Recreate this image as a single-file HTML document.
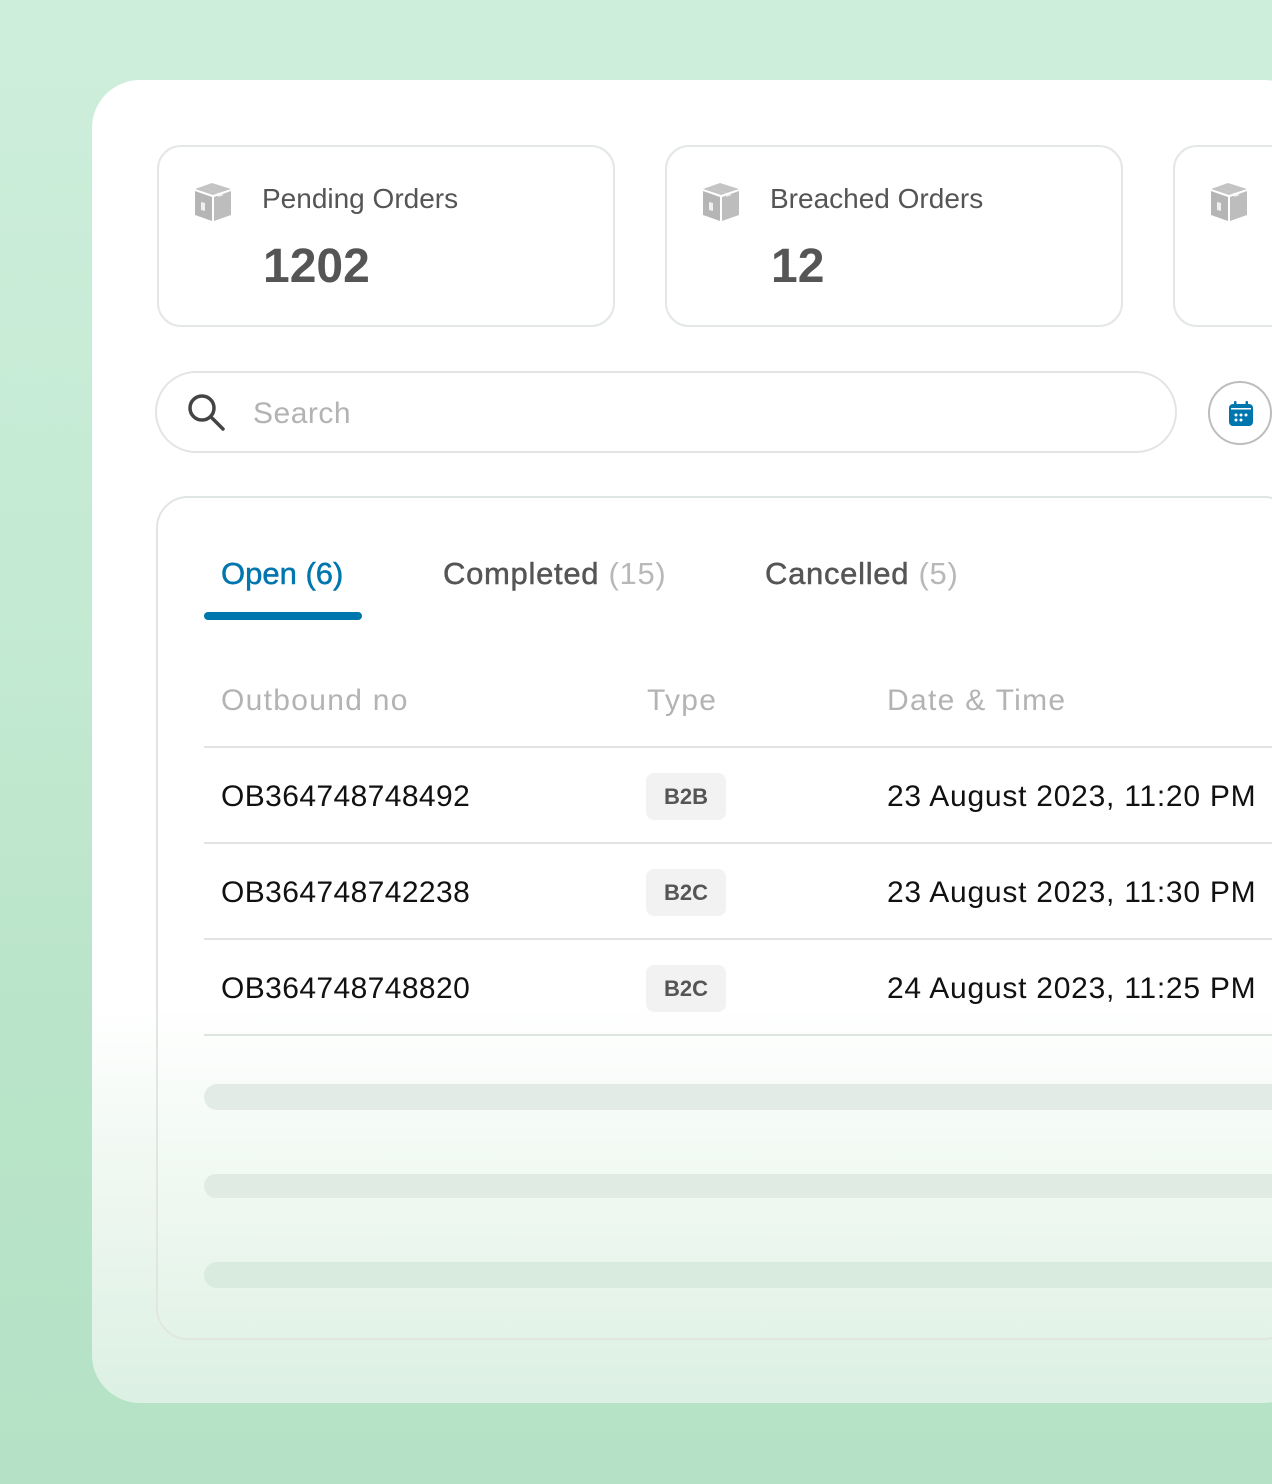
<!DOCTYPE html>
<html><head><meta charset="utf-8"><style>
*{margin:0;padding:0;box-sizing:border-box}
html,body{width:1272px;height:1484px;overflow:hidden}
body{font-family:"Liberation Sans",sans-serif;background:linear-gradient(180deg,#cdeedb 0%,#c4ead3 40%,#b9e4c9 70%,#b5e2c6 100%);position:relative}
.card{position:absolute;left:92px;top:80px;width:1220px;height:1323px;border-radius:48px;background:linear-gradient(180deg,#fff 0%,#fff 70%,#f0f8f2 82%,#dcf0e3 100%)}
.stat{position:absolute;top:145px;width:458px;height:182px;border:2px solid #e3e7e5;border-radius:24px;background:#fff}
.stat .ic{position:absolute;left:34px;top:34px}
.stat .t{position:absolute;left:103px;top:36px;font-size:28px;color:#555}
.stat .n{position:absolute;left:104px;top:92px;font-size:48px;font-weight:bold;color:#555}
.search{position:absolute;left:155px;top:371px;width:1022px;height:82px;border:2px solid #e3e5e4;border-radius:41px;background:#fff}
.search span{position:absolute;left:96px;top:24px;font-size:30px;color:#b3b3b3;letter-spacing:0.5px}
.cal{position:absolute;left:1208px;top:381px;width:64px;height:64px;border:2px solid #bdbdbd;border-radius:50%;background:#fff}
.panel{position:absolute;left:156px;top:496px;width:1140px;height:844px;border:2px solid #e0e6e2;border-radius:32px;background:linear-gradient(180deg,#fff 0%,#fff 60%,#f1f9f3 80%,#e3f3e8 100%)}
.tab{position:absolute;top:556px;font-size:31px;color:#555;-webkit-text-stroke:0.5px currentColor;letter-spacing:0.7px}
.tab i{font-style:normal;color:#b8b8b8;-webkit-text-stroke:0}
.ul{position:absolute;left:204px;top:612px;width:158px;height:8px;border-radius:4px;background:#0076ae}
.h{position:absolute;top:684px;font-size:30px;color:#b3b3b3;letter-spacing:1.3px}
.line{position:absolute;left:204px;width:1068px;height:2px;background:#e2e4e3}
.r{position:absolute;font-size:30px;color:#111;letter-spacing:0.4px}
.d{letter-spacing:0.75px}
.b{position:absolute;left:646px;width:80px;height:47px;border-radius:8px;background:#f2f2f2;font-size:22px;font-weight:bold;color:#555;text-align:center;line-height:47px}
.sk{position:absolute;left:204px;width:1068px;height:26px;border-radius:13px 0 0 13px;background:#e2ebe6}
</style></head><body>
<div class="card"></div>
<svg width="0" height="0" style="position:absolute"><defs><g id="box"><path d="M2 8 L19 2 L38 8 L20 14 Z" fill="#c4c4c4"/><path d="M2 10 L19 16 L19 40 L2 34 Z" fill="#b5b5b5"/><path d="M21 16 L38 10 L38 34 L21 40 Z" fill="#bdbdbd"/><path d="M8 6 L25 12 L25 16 L31 14 L14 8 Z" fill="#fff" opacity=".7"/><path d="M8 21 L8 29 L12 30 L12 22 Z" fill="#fff" opacity=".8"/></g></defs></svg>
<div class="stat" style="left:157px"><svg class="ic" width="40" height="42"><use href="#box"/></svg><div class="t">Pending Orders</div><div class="n">1202</div></div>
<div class="stat" style="left:665px"><svg class="ic" width="40" height="42"><use href="#box"/></svg><div class="t">Breached Orders</div><div class="n">12</div></div>
<div class="stat" style="left:1173px"><svg class="ic" width="40" height="42"><use href="#box"/></svg></div>
<div class="search"><svg style="position:absolute;left:28px;top:18px" width="44" height="44"><circle cx="17" cy="17" r="12" fill="none" stroke="#444" stroke-width="3.5"/><line x1="26" y1="26" x2="38" y2="38" stroke="#444" stroke-width="3.5" stroke-linecap="round"/></svg><span>Search</span></div>
<div class="cal"><svg style="position:absolute;left:18px;top:17px" width="26" height="28"><rect x="1" y="4" width="24" height="22" rx="4" fill="#0076ae"/><rect x="6" y="1" width="2.5" height="6" rx="1" fill="#0076ae"/><rect x="17.5" y="1" width="2.5" height="6" rx="1" fill="#0076ae"/><rect x="3" y="8" width="20" height="1.5" fill="#fff"/><g fill="#fff"><circle cx="8" cy="15" r="1.5"/><circle cx="13" cy="15" r="1.5"/><circle cx="18" cy="15" r="1.5"/><circle cx="8" cy="20" r="1.5"/><circle cx="13" cy="20" r="1.5"/></g></svg></div>
<div class="panel"></div>
<div class="tab" style="left:221px;color:#0076ae;letter-spacing:0">Open (6)</div>
<div class="tab" style="left:443px">Completed <i>(15)</i></div>
<div class="tab" style="left:765px">Cancelled <i>(5)</i></div>
<div class="ul"></div>
<div class="h" style="left:221px">Outbound no</div>
<div class="h" style="left:647px">Type</div>
<div class="h" style="left:887px">Date &amp; Time</div>
<div class="line" style="top:746px"></div>
<div class="r" style="left:221px;top:780px">OB364748748492</div><div class="b" style="top:773px">B2B</div><div class="r d" style="left:887px;top:780px">23 August 2023, 11:20 PM</div>
<div class="line" style="top:842px"></div>
<div class="r" style="left:221px;top:876px">OB364748742238</div><div class="b" style="top:869px">B2C</div><div class="r d" style="left:887px;top:876px">23 August 2023, 11:30 PM</div>
<div class="line" style="top:938px"></div>
<div class="r" style="left:221px;top:972px">OB364748748820</div><div class="b" style="top:965px">B2C</div><div class="r d" style="left:887px;top:972px">24 August 2023, 11:25 PM</div>
<div class="line" style="top:1034px;background:#dde5e0"></div>
<div class="sk" style="top:1084px"></div>
<div class="sk" style="top:1174px;height:24px;background:#dfebe3"></div>
<div class="sk" style="top:1262px;background:#d9eadf"></div>
</body></html>
